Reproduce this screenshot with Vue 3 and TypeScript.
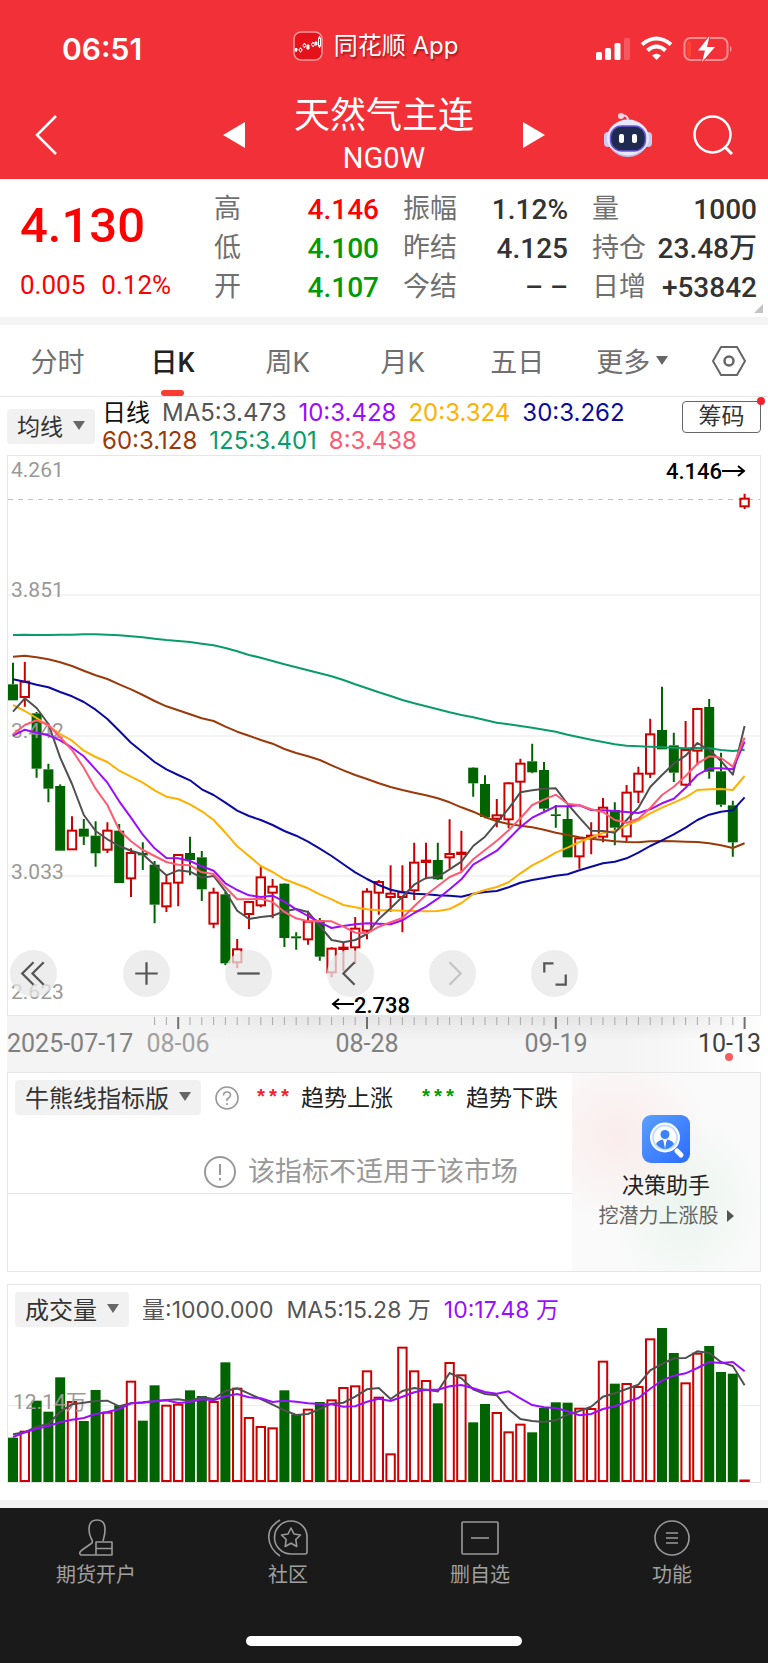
<script setup lang="ts">
import { ref } from 'vue'

interface Quote { label: string; value: string; tone?: string }
interface Line { name: string; color: string; points: number[] }
type Candle = [up: 0 | 1, high: number, top: number, bottom: number, low: number]

const quotes: Quote[][] = [
  [{ label: '高', value: '4.146', tone: 'up' }, { label: '低', value: '4.100', tone: 'down' }, { label: '开', value: '4.107', tone: 'down' }],
  [{ label: '振幅', value: '1.12%' }, { label: '昨结', value: '4.125' }, { label: '今结', value: '– –' }],
  [{ label: '量', value: '1000' }, { label: '持仓', value: '23.48万' }, { label: '日增', value: '+53842' }],
]

const tabs = ['分时', '日K', '周K', '月K', '五日', '更多']
const activeTab = ref('日K')

const legend = [
  [
    { text: '日线', color: '#111111' }, { text: 'MA5:3.473', color: '#555555' }, { text: '10:3.428', color: '#9b0dff' },
    { text: '20:3.324', color: '#ffb000' }, { text: '30:3.262', color: '#0a0aa0' },
  ],
  [{ text: '60:3.128', color: '#9a3a0a' }, { text: '125:3.401', color: '#0a9c68' }, { text: '8:3.438', color: '#ff5b74' }],
]

const px = (i: number) => 13 + i * 11.8
const py = (v: number) => v / 3 + 145
const vy = (v: number) => v / 3 - 47
const shift = (rows: Candle[], by: number): Candle[] =>
  rows.map(([up, h, t, b, l]) => [up, h + by, t + by, b + by, l + by])
const add = (vals: number[], by: number) => vals.map((v) => v + by)

const candles: Candle[] = [
  ...shift([
    [0, 188, 253, 301, 301], [1, 186, 245, 291, 320], [0, 336, 340, 506, 533], [0, 491, 508, 566, 607],
    [0, 553, 558, 752, 752], [1, 649, 692, 748, 748], [0, 657, 686, 710, 735], [0, 664, 707, 760, 800],
    [1, 667, 692, 749, 759], [0, 672, 692, 849, 849], [1, 745, 759, 835, 891], [0, 727, 759, 766, 810],
    [0, 783, 794, 914, 970], [1, 826, 850, 919, 936], [1, 762, 765, 848, 919], [0, 710, 759, 780, 826],
    [0, 753, 772, 868, 903], [1, 863, 878, 971, 985], [0, 875, 883, 1090, 1095], [1, 1017, 1048, 1087, 1105],
    [1, 905, 906, 942, 987],
  ], 0),
  ...shift([
    [1, 378, 412, 496, 502], [1, 417, 440, 458, 535], [0, 430, 431, 594, 621], [0, 577, 589, 595, 629],
    [1, 512, 545, 598, 614], [0, 534, 540, 650, 662], [1, 622, 626, 697, 712], [1, 608, 623, 627, 693],
    [1, 531, 566, 622, 672], [1, 445, 455, 572, 598], [1, 420, 426, 458, 524], [1, 376, 461, 471, 515],
    [1, 376, 457, 471, 577], [1, 308, 368, 451, 480], [1, 308, 362, 366, 418], [0, 308, 360, 418, 420],
    [1, 238, 342, 352, 386], [1, 272, 338, 342, 394], [0, 82, 83, 130, 170], [0, 106, 132, 231, 235],
    [1, 177, 226, 236, 262],
  ], 420),
  ...shift([
    [1, 427, 430, 538, 565], [1, 356, 371, 425, 565], [0, 311, 364, 397, 400], [0, 366, 390, 506, 512],
    [0, 495, 523, 528, 563], [0, 501, 537, 652, 652], [1, 592, 595, 649, 686], [1, 547, 587, 591, 643],
    [1, 474, 503, 590, 607], [0, 487, 510, 563, 616], [1, 435, 458, 589, 604], [1, 380, 401, 455, 489],
    [1, 236, 283, 401, 414], [0, 140, 270, 328, 328], [0, 278, 316, 398, 426], [1, 243, 330, 434, 437],
    [1, 203, 207, 332, 376], [0, 177, 201, 395, 416], [0, 338, 394, 494, 500], [0, 482, 496, 607, 650],
    [1, -439, -424, -401, -393],
  ], 120),
]

const lines: Line[] = [
  {
    name: 'ma125', color: '#0a9c68', points: [
      105, 104, 105, 105, 104, 104, 103, 103, 104, 106, 109, 112, 116, 120, 123, 126, 131, 136, 144, 154, 165,
      ...add([53, 63, 73, 82, 91, 100, 109, 120, 133, 145, 157, 168, 180, 190, 199, 208, 217, 225, 232, 240, 248,
        253, 258, 263, 269, 275, 284, 292, 299, 306, 313, 317, 319, 320, 322, 323, 325, 324, 325, 330, 333, 329], 120),
    ],
  },
  {
    name: 'ma60', color: '#9a3a0a', points: [
      170, 167, 172, 178, 187, 198, 212, 226, 237, 253, 268, 285, 303, 319, 331, 343, 355, 363, 380, 395, 407,
      ...add([0, 11, 27, 39, 49, 60, 76, 91, 105, 117, 130, 141, 150, 158, 166, 175, 187, 202, 215, 231, 244], 420),
      ...add([552, 557, 562, 569, 578, 585, 592, 596, 600, 604, 606, 607, 604, 603, 604, 605, 606, 610, 616, 624, 610], 120),
    ],
  },
  {
    name: 'ma30', color: '#0a0aa0', points: [
      238, 245, 254, 262, 276, 289, 306, 329, 357, 392, 428, 457, 486, 508, 525, 541, 568, 585, 608, 632, 648,
      ...add([240, 255, 273, 287, 305, 326, 348, 373, 397, 417, 435, 449, 457, 461, 463, 466, 467, 470, 461, 456, 453], 420),
      ...add([742, 728, 720, 714, 707, 703, 691, 680, 670, 665, 655, 638, 618, 601, 583, 563, 540, 524, 515, 511, 472], 120),
    ],
  },
  {
    name: 'ma20', color: '#ffb000', points: [
      315, 333, 354, 377, 402, 422, 452, 471, 486, 512, 530, 548, 571, 590, 597, 613, 634, 660, 698, 739, 768,
      ...add([378, 396, 418, 431, 445, 463, 478, 495, 502, 508, 511, 511, 512, 513, 514, 513, 507, 489, 462, 450, 441], 420),
      ...add([727, 700, 676, 658, 638, 623, 606, 592, 579, 573, 556, 541, 520, 503, 488, 472, 450, 448, 447, 450, 408], 120),
    ],
  },
  {
    name: 'ma5', color: '#505050', points: [
      335, 295, 324, 372, 473, 552, 645, 693, 718, 738, 752, 763, 795, 826, 811, 815, 833, 828, 874, 932, 957,
      ...add([531, 527, 514, 507, 516, 558, 600, 607, 600, 582, 537, 505, 470, 434, 414, 411, 388, 365, 318, 290, 248], 420),
      ...add([506, 457, 451, 446, 445, 492, 533, 572, 573, 578, 540, 503, 441, 405, 371, 347, 309, 330, 363, 404, 258], 120),
    ],
  },
  {
    name: 'ma10', color: '#9b0dff', points: [
      407, 389, 398, 406, 421, 443, 469, 508, 548, 604, 653, 704, 745, 774, 775, 783, 799, 812, 850, 870, 886,
      ...add([471, 467, 485, 508, 528, 547, 564, 558, 553, 550, 551, 553, 541, 519, 500, 476, 448, 418, 374, 353, 332], 420),
      ...add([597, 561, 533, 516, 499, 499, 496, 510, 511, 513, 516, 519, 508, 490, 476, 443, 405, 385, 385, 388, 305], 120),
    ],
  },
  {
    name: 'ma8', color: '#ff5b74', points: [
      403, 375, 361, 375, 412, 450, 503, 566, 615, 690, 724, 750, 768, 786, 794, 796, 817, 822, 862, 898, 898,
      ...add([476, 486, 516, 535, 544, 543, 544, 560, 578, 580, 560, 547, 534, 499, 465, 438, 411, 396, 358, 330, 302], 420),
      ...add([571, 535, 495, 479, 464, 491, 496, 508, 516, 540, 548, 536, 504, 465, 440, 408, 371, 349, 353, 380, 293], 120),
    ],
  },
]

const path = (pts: number[], y: (v: number) => number) =>
  pts.map((v, i) => `${px(i).toFixed(1)},${y(v).toFixed(1)}`).join(' ')

const levels = [
  { text: '4.261', y: 15, grid: 0 }, { text: '3.851', y: 135, grid: 140 }, { text: '3.442', y: 276, grid: 281 },
  { text: '3.033', y: 417, grid: 421 }, { text: '2.623', y: 537, grid: 0 },
]
const dates = [
  { text: '2025-07-17', x: 7, anchor: 'start', fill: '#808080' }, { text: '08-06', x: 178, anchor: 'middle', fill: '#a0a0a0' },
  { text: '08-28', x: 367, anchor: 'middle', fill: '#808080' }, { text: '09-19', x: 556, anchor: 'middle', fill: '#808080' },
  { text: '10-13', x: 761, anchor: 'end', fill: '#404040' },
]
const ticks = Array.from({ length: 51 }, (_, k) => k + 12)

const volumes = [
  473, 452, 362, 395, 292, 363, 423, 330, 395, 376, 302, 422, 316, 374, 371, 331, 348, 363, 247, 323, 411, 438, 442, 331, 403, 386,
  366, 358, 321, 316, 271, 350, 520, 200, 271, 300, 370, 246, 283, 427, 372, 396, 454, 431, 457, 384, 367, 368, 383, 384, 242, 311,
  309, 318, 175, 144, 219, 307, 218, 198, 276, 281, 602,
]
const volumeUp = new Set([
  1, 5, 8, 10, 13, 14, 17, 19, 20, 21, 22, 25, 27, 28, 29, 30, 31, 32, 33, 34, 35, 37, 38, 41, 42, 43, 48, 49, 50, 52, 53, 54, 57, 58, 62,
])
const volumeLines: Line[] = [
  {
    name: 'ma5', color: '#505050', points: [
      463, 457, 440, 432, 395, 373, 368, 363, 362, 379, 370, 367, 363, 360, 358, 363, 351, 357, 333, 325, 341, 357, 374, 391, 405, 402,
      387, 371, 368, 350, 328, 324, 357, 333, 324, 329, 334, 279, 295, 328, 342, 346, 388, 417, 423, 426, 421, 404, 393, 380, 350, 340,
      327, 314, 271, 252, 235, 234, 214, 219, 246, 258, 316],
  },
  {
    name: 'ma10', color: '#9b0dff', points: [
      471, 457, 446, 438, 427, 419, 414, 402, 396, 387, 370, 368, 364, 361, 369, 366, 358, 361, 349, 342, 352, 355, 366, 362, 365, 370,
      372, 373, 380, 379, 365, 356, 363, 350, 337, 329, 329, 319, 315, 325, 336, 341, 334, 355, 375, 382, 384, 394, 406, 402, 387, 379,
      365, 354, 326, 302, 287, 280, 264, 246, 249, 246, 274],
  },
]
const tools = [
  { label: '最早', d: 'M23 12 12 23l11 11M33 12 22 23l11 11' },
  { label: '放大', d: 'M23 12v22M12 23h22' },
  { label: '缩小', d: 'M12 23h22' },
  { label: '向左', d: 'M27 12 16 23l11 11' },
  { label: '向右', d: 'M20 12l11 11-11 11', off: true },
  { label: '全屏', d: 'M13 22v-9h9M24 34h10v-10' },
]
</script>

<template>
  <main class="page">
    <header class="top">
      <div class="status">
        <span class="clock">06:51</span>
        <span class="app">
          <svg width="30" height="30" viewBox="0 0 30 30" fill="none" stroke="#fff">
            <rect x="1" y="1" width="28" height="28" rx="7" fill="#e3121b" stroke="#ff9a9e" stroke-width="1.5" />
            <path d="M3 17v4M11.500 12v5M20 11v5M7.500 16.500v5M26.500 5v12" stroke-width="1.200" />
            <path d="M2 17.500h2v2H2zM14 14h2v4h-2zM22 11h2v3h-2z" fill="#fff" />
            <circle cx="7.500" cy="19" r="1.500" fill="#e3121b" /><circle cx="11.500" cy="14.500" r="1.500" fill="#e3121b" />
            <circle cx="20" cy="13.500" r="1.500" fill="#e3121b" /><rect x="25.500" y="7" width="2" height="8" fill="#e3121b" />
          </svg>
          同花顺 App
        </span>
        <svg class="signals" width="137" height="26" viewBox="0 0 137 26">
          <g fill="#fff">
            <rect x="0" y="16" width="6" height="8" rx="1.500" /><rect x="9" y="12" width="6" height="12" rx="1.500" />
            <rect x="18.500" y="7" width="6" height="17" rx="1.500" /><rect x="28" y="2" width="6" height="22" rx="1.500" opacity=".2" />
            <path d="M60.500 24l-4.500-4.500q4.500-3.500 9 0z" />
          </g>
          <path d="M46 8.500q14.500-12 29 0M51.500 14.500q9-8 18 0" fill="none" stroke="#fff" stroke-width="4" />
          <rect x="88.500" y="2" width="43" height="22" rx="6" fill="none" stroke="#fff" stroke-opacity=".45" stroke-width="2" />
          <rect x="91" y="5" width="4" height="16" rx="2" fill="#ff4433" />
          <path d="M134 9.500q3 3.500 0 7z" fill="#fff" opacity=".5" />
          <path d="M113.500 0 102 14.500h7L106 26l13-15h-8z" fill="#fff" stroke="#f13038" stroke-width="2" paint-order="stroke" />
        </svg>
      </div>
      <div class="titlebar">
        <button class="bare" aria-label="返回">
          <svg width="23" height="40" viewBox="0 0 23 40"><path d="M21 1 2 20l19 19" fill="none" stroke="#fff" stroke-width="2.500" /></svg>
        </button>
        <div class="switcher">
          <button class="bare" aria-label="上一个"><svg width="22" height="26" viewBox="0 0 22 26"><path d="M22 0v26L0 13z" fill="#fff" /></svg></button>
          <div class="name">
            <h1>天然气主连</h1>
            <p>NG0W</p>
          </div>
          <button class="bare" aria-label="下一个"><svg width="22" height="26" viewBox="0 0 22 26"><path d="M0 0v26l22-13z" fill="#fff" /></svg></button>
        </div>
        <div class="actions">
          <button class="bare" aria-label="智能助手">
            <svg width="48" height="46" viewBox="0 0 48 46">
              <path d="M17 4q7-2 7 5" fill="none" stroke="#d8dcf5" stroke-width="2" />
              <circle cx="17" cy="4" r="3" fill="#f3d5e2" />
              <rect x="0" y="20" width="8" height="15" rx="4" fill="#c9ccef" /><rect x="40" y="20" width="8" height="15" rx="4" fill="#c9ccef" />
              <ellipse cx="24" cy="26" rx="21" ry="18.500" fill="#e6e9fb" />
              <path d="M7 36q17 15 34 0-6 9-17 9T7 36z" fill="#b9c0ea" />
              <rect x="6.500" y="14" width="35" height="25" rx="11" fill="#1e2a4f" stroke="#6f55d9" stroke-width="1.500" />
              <rect x="15" y="22" width="5" height="9" rx="2" fill="#fff" /><rect x="28" y="22" width="5" height="9" rx="2" fill="#fff" />
            </svg>
          </button>
          <button class="bare" aria-label="搜索">
            <svg width="40" height="40" viewBox="0 0 40 40"><circle cx="19.500" cy="19.500" r="18" fill="none" stroke="#fff" stroke-width="2.500" /><path d="m32 32 7 7" stroke="#fff" stroke-width="3" /></svg>
          </button>
        </div>
      </div>
    </header>

    <section class="quote">
      <div class="last">
        <strong>4.130</strong>
        <span class="change"><span>0.005</span><span>0.12%</span></span>
      </div>
      <dl v-for="(col, c) in quotes" :key="c">
        <div v-for="q in col" :key="q.label"><dt>{{ q.label }}</dt><dd :class="q.tone">{{ q.value }}</dd></div>
      </dl>
      <svg class="fold" width="9" height="9" viewBox="0 0 9 9"><path d="M9 0v9H0z" fill="#c4c4c4" /></svg>
    </section>

    <nav class="tabs">
      <button v-for="t in tabs" :key="t" class="tab" :class="{ on: t === activeTab }" @click="activeTab = t">
        {{ t }}<i v-if="t === '更多'" class="caret"></i>
      </button>
      <button class="tab" aria-label="设置">
        <svg width="34" height="30" viewBox="0 0 34 30" fill="none" stroke="#666" stroke-width="2"><path d="M9 1h16l8 14-8 14H9L1 15z" stroke-linejoin="round" /><circle cx="17" cy="15" r="4.500" stroke-width="2.500" /></svg>
      </button>
    </nav>

    <section class="legend">
      <button class="pill">均线<i class="caret"></i></button>
      <div class="values">
        <p v-for="(row, r) in legend" :key="r">
          <span v-for="l in row" :key="l.text" :style="{ color: l.color }">{{ l.text }}</span>
        </p>
      </div>
      <button class="chips">筹码<i class="dot"></i></button>
    </section>

    <section class="price">
      <svg class="plot" viewBox="0 0 768 617">
        <defs>
          <linearGradient id="axisFade"><stop offset="0" stop-color="#f4f4f4" /><stop offset=".82" stop-color="#f4f4f4" /><stop offset="1" stop-color="#fefefe" /></linearGradient>
          <linearGradient id="axisShade" x2="0" y2="1"><stop offset="0" stop-color="#e4e4e4" /><stop offset="1" stop-color="#e4e4e4" stop-opacity="0" /></linearGradient>
          <linearGradient id="shadeMask"><stop offset=".2" stop-color="#000" /><stop offset=".4" stop-color="#fff" /><stop offset=".85" stop-color="#fff" /><stop offset="1" stop-color="#000" /></linearGradient>
          <mask id="axisMask"><rect x="7" y="561" width="754" height="24" fill="url(#shadeMask)" /></mask>
        </defs>
        <rect x="7" y="561" width="754" height="56" fill="url(#axisFade)" />
        <rect x="7" y="561" width="754" height="24" fill="url(#axisShade)" mask="url(#axisMask)" />
        <rect x="7.500" y=".5" width="753" height="560" fill="#fff" stroke="#e6e6e6" />
        <template v-for="l in levels" :key="l.text"><path v-if="l.grid" :d="`M8 ${l.grid}H760`" stroke="#f0f0f0" stroke-width="1.500" /></template>
        <path d="M8 44.500H760" stroke="#d8bd98" stroke-width="1.200" stroke-dasharray="5 5" />
        <g v-for="(c, i) in candles" :key="i" :stroke="c[0] ? '#cc0000' : '#006400'" stroke-width="2">
          <path :d="`M${px(i)} ${py(c[1])}V${py(c[2])}M${px(i)} ${py(c[3])}V${py(c[4])}`" />
          <rect v-if="c[0]" :x="px(i) - 4.2" :y="py(c[2])" width="8.400" :height="py(c[3]) - py(c[2])" fill="none" />
          <rect v-else :x="px(i) - 5" :y="py(c[2])" width="10" :height="py(c[3]) - py(c[2])" fill="#006400" stroke="none" />
        </g>
        <g class="num" font-size="21" fill="#999"><text v-for="l in levels" :key="l.text" x="11" :y="l.y + 7">{{ l.text }}</text></g>
        <polyline v-for="l in lines" :key="l.name" :points="path(l.points, py)" fill="none" :stroke="l.color" stroke-width="2" stroke-linejoin="round" />
        <g class="num" font-size="22" font-weight="500" fill="#000">
          <text x="666" y="24">4.146</text><text x="354" y="558">2.738</text>
        </g>
        <path d="M722 16h22m-6-5 6 5-6 5M354 549h-21m6-5-6 5 6 5" fill="none" stroke="#000" stroke-width="2" />
        <path v-for="i in ticks" :key="i" :d="`M${px(i)} 562v${(i - 14) % 16 ? 8 : 12}`" :stroke="(i - 14) % 16 ? '#a8a8a8' : '#707070'" :stroke-width="(i - 14) % 16 ? 1 : 2" />
        <g class="num" font-size="25">
          <text v-for="d in dates" :key="d.text" :x="d.x" y="597" :text-anchor="d.anchor" :fill="d.fill">{{ d.text }}</text>
        </g>
        <circle cx="729" cy="602" r="4" fill="#f85c5c" />
      </svg>
      <div class="tools">
        <button v-for="t in tools" :key="t.label" :aria-label="t.label">
          <svg viewBox="0 0 46 46" fill="none" :stroke="t.off ? '#c4c4c4' : '#555'" stroke-width="2.200"><path :d="t.d" /></svg>
        </button>
      </div>
    </section>

    <section class="panel indicator">
      <div class="chartside">
        <div class="upper">
          <div class="bar">
            <button class="pill">牛熊线指标版<i class="caret"></i></button>
            <svg class="help" width="24" height="24" viewBox="0 0 24 24" fill="none" stroke="#999" stroke-width="1.600"><circle cx="12" cy="12" r="11" /><path d="M8.500 9.500q0-3.500 3.500-3.500t3.500 3q0 2-2 3T12 15M12 17v2" /></svg>
            <span class="key"><b class="red">***</b>趋势上涨</span>
            <span class="key"><b class="green">***</b>趋势下跌</span>
          </div>
          <p class="notice">
            <svg width="32" height="32" viewBox="0 0 32 32" fill="none" stroke="#999" stroke-width="2"><circle cx="16" cy="16" r="15" /><path d="M16 8v11M16 22v2.500" /></svg>
            该指标不适用于该市场
          </p>
        </div>
      </div>
      <a class="helper" href="#">
        <svg width="48" height="48" viewBox="0 0 48 48">
          <defs><linearGradient id="tile" x2="1" y2="1"><stop offset="0" stop-color="#5aa0ff" /><stop offset="1" stop-color="#2c6bff" /></linearGradient></defs>
          <rect width="48" height="48" rx="9" fill="url(#tile)" />
          <path d="m35 36 4 4" stroke="#fff" stroke-width="5" stroke-linecap="round" />
          <circle cx="23" cy="22.500" r="14" fill="#c4dcff" stroke="#fff" stroke-width="2" /><circle cx="23" cy="22.500" r="11" fill="#fff" />
          <circle cx="23" cy="19.500" r="4.500" fill="#3b82fa" /><path d="M14 29q2-4 7-4.500l2 6 2-6q5 .5 7 4.500-4 5-9 5t-9-5z" fill="#3b82fa" /><path d="m21.500 25 1.500 9 1.500-9z" fill="#fff" />
        </svg>
        <strong>决策助手</strong>
        <span>挖潜力上涨股<i class="arrow"></i></span>
      </a>
    </section>

    <section class="panel volume">
      <div class="bar">
        <button class="pill">成交量<i class="caret"></i></button>
        <span class="vol">量:1000.000</span><span class="vol">MA5:15.28 万</span><span class="vol purple">10:17.48 万</span>
      </div>
      <svg class="plot" viewBox="8 0 752 155">
        <path d="M8 78.500H760" stroke="#ececec" />
        <g v-for="(v, i) in volumes" :key="i">
          <rect v-if="volumeUp.has(i)" :x="px(i) - 4.2" :y="Math.min(vy(v) + 1, 153.5)" width="8.400" :height="Math.max(153 - vy(v), 0.5)" fill="none" stroke="#cc0000" stroke-width="2" />
          <rect v-else :x="px(i) - 5" :y="vy(v)" width="10" :height="155 - vy(v)" fill="#006400" />
        </g>
        <text class="num" x="13" y="82" font-size="21" fill="#999">12.14万</text>
        <polyline v-for="l in volumeLines" :key="l.name" :points="path(l.points, vy)" fill="none" :stroke="l.color" stroke-width="2" />
      </svg>
    </section>

    <footer class="bottom">
      <nav>
        <a href="#">
          <svg width="40" height="38" viewBox="0 0 40 38"><path d="M36 36H5q-3-2 1-5l10-7q1-2-1-5-2-4-2-9 0-9 8-9t8 9q0 5-1 8l-1 4M20 36V23h16v13H20zM20 29.500h16" /></svg>
          期货开户
        </a>
        <a href="#">
          <svg width="40" height="38" viewBox="0 0 40 38"><path d="M23 2a16 16 0 1 0 0 33h14a2 2 0 0 0 2-2V18A16 16 0 0 0 23 2zM12 1Q0 8 0.800 19T12 37" /><path d="m23 9 3 6 6.500 1-4.700 4.500 1 7-5.800-3.300-5.800 3.300 1-7L13.500 16l6.500-1z" /></svg>
          社区
        </a>
        <a href="#">
          <svg width="40" height="38" viewBox="0 0 40 38"><rect x="2" y="3" width="36" height="32" rx="1" /><path d="M11 19h18" /></svg>
          删自选
        </a>
        <a href="#">
          <svg width="40" height="38" viewBox="0 0 40 38"><circle cx="20" cy="19" r="17" /><path d="M14 14h12M14 19h12M14 24h12" /></svg>
          功能
        </a>
      </nav>
      <div class="home"></div>
    </footer>
  </main>
</template>

<style>
body { margin: 0; background: #fff; }
</style>

<style scoped>
* { box-sizing: border-box; }
.page { font-family: Roboto, "Noto Sans CJK SC", sans-serif; color: #333; background: #fff; }
button { font: inherit; color: inherit; border: 0; padding: 0; background: none; cursor: pointer; }
a { color: inherit; text-decoration: none; }
h1, p, dl, dd { margin: 0; font-weight: 400; }
svg { display: block; }
.bare { display: block; }
.plot { width: 100%; height: auto; }
.num { font-family: Roboto, "Noto Sans CJK SC", sans-serif; }

.top { height: 179px; background: #f13038; color: #fff; }
.status { display: grid; grid-template-columns: 1fr auto 1fr; align-items: center; padding: 28px 35px 0 62px; height: 68px; }
.clock { padding-top: 2px; font: 600 30px/36px Inter, sans-serif; }
.app { display: flex; align-items: center; gap: 11px; margin-right: 44px; padding-bottom: 4px; font: 400 24px/34px Inter, "Noto Sans CJK SC", sans-serif; text-shadow: 1px 2px 2px rgba(90, 0, 0, .5); }
.signals { justify-self: end; margin-top: 2px; }
.titlebar { display: grid; grid-template-columns: 1fr 322px 1fr; align-items: center; height: 111px; padding: 0 35px 0 35px; }
.switcher { display: flex; align-items: center; justify-content: space-between; }
.switcher > .bare { padding-top: 22px; }
.titlebar > .bare, .actions { padding-top: 22px; }
.name { text-align: center; padding-top: 23px; }
.name h1 { font-size: 36px; line-height: 46px; }
.name p { font-size: 29px; line-height: 38px; }
.actions { display: flex; align-items: center; justify-content: flex-end; gap: 41px; }

.quote { position: relative; display: grid; grid-template-columns: 170fr 165fr 165fr 165fr; gap: 24px; height: 146px; padding: 11px 11px 0 20px; border-bottom: 8px solid #f4f4f4; }
.last { color: #f00; white-space: nowrap; }
.last strong { display: block; font-size: 49px; line-height: 72px; font-weight: 500; }
.change { display: flex; gap: 16px; font-size: 26px; line-height: 46px; }
dl > div { display: flex; justify-content: space-between; height: 39px; line-height: 39px; white-space: nowrap; }
dt { font-size: 27px; color: #707070; }
dd { font-size: 28px; font-weight: 500; }
.up { color: #f00; }
.down { color: #009b00; }
.fold { position: absolute; right: 5px; bottom: 4px; }

.tabs { display: grid; grid-template-columns: repeat(6, 147fr) 100fr; height: 72px; border-bottom: 1px solid #e6e6e6; }
.tab { position: relative; display: flex; align-items: center; justify-content: center; font-size: 27px; color: #707070; }
.tab.on { color: #222; font-weight: 500; }
.tab.on::after { content: ""; position: absolute; bottom: 0; width: 23px; height: 6px; border-radius: 3px; background: #fa3c32; }
.caret { margin-left: 10px; border: 6px solid transparent; border-top: 9px solid #666; border-bottom: 0; }
.tab .caret { margin-left: 6px; }

.legend { display: flex; align-items: flex-start; height: 58px; padding: 0 7px; }
.pill { display: flex; align-items: center; height: 35px; padding: 0 10px 3px; border-radius: 4px; background: #f1f1f1; font-size: 24px; white-space: nowrap; }
.legend .pill { margin-top: 12px; font-size: 23px; }
.values { flex: 1; padding: 2px 0 0 7px; font: 400 24px/28px Inter, "Noto Sans CJK SC", sans-serif; }
.values p { display: flex; gap: 12px; height: 28px; white-space: nowrap; }
.chips { position: relative; width: 79px; height: 32px; margin-top: 4px; border: 1px solid #666; border-radius: 4px; font-size: 23px; line-height: 30px; }
.dot { position: absolute; right: -5px; top: -5px; width: 8px; height: 8px; border-radius: 50%; background: #f5222d; }

.price { position: relative; }
.tools { position: absolute; left: 10px; right: 190px; top: 495px; display: flex; justify-content: space-between; }
.tools button { width: 47px; height: 47px; border-radius: 50%; background: rgba(231, 231, 231, .75); }
.tools button:first-child { margin-right: 11px; }

.panel { margin: 0 7px; border: 1px solid #e6e6e6; }
.bar { display: flex; align-items: center; padding: 7px 7px 0; white-space: nowrap; }
.indicator { display: flex; height: 200px; }
.chartside { flex: 1; min-width: 0; }
.upper { height: 121px; border-bottom: 1px solid #e6e6e6; }
.help { flex: none; margin: 0 16px 0 14px; }
.key { display: flex; align-items: center; gap: 10px; height: 35px; margin-right: 27px; padding-bottom: 3px; font-size: 23px; color: #222; }
.key b { padding-top: 6px; font: 700 20px/20px "Liberation Mono", monospace; }
.red { color: #f5222d; }
.green { color: #009b00; }
.notice { display: flex; align-items: center; gap: 12px; margin-top: 36px; padding-left: 196px; font-size: 27px; line-height: 42px; color: #999; white-space: nowrap; }
.helper { flex: none; width: 188px; display: flex; flex-direction: column; align-items: center; padding-top: 42px; background: radial-gradient(ellipse at 25% 32%, #faecec, rgba(250, 236, 236, 0) 45%), radial-gradient(ellipse at 60% 66%, #eaf5ee, rgba(234, 245, 238, 0) 50%), #fafafa; }
.helper strong { margin-top: 7px; font-size: 22px; line-height: 32px; font-weight: 400; color: #222; }
.helper span { display: flex; align-items: center; font-size: 20px; line-height: 28px; color: #666; white-space: nowrap; }
.arrow { margin-left: 8px; border: 6px solid transparent; border-left: 7px solid #555; border-right: 0; }

.volume { margin-top: 12px; }
.vol { margin-left: 13px; font: 400 23px/34px Inter, "Noto Sans CJK SC", sans-serif; color: #555; }
.purple { color: #9b0dff; }

.bottom { margin-top: 17px; border-top: 8px solid #f4f4f4; height: 163px; background: #1a1a1a; color: #a0a0a0; display: flex; flex-direction: column; justify-content: space-between; align-items: center; }
.bottom nav { align-self: stretch; display: grid; grid-template-columns: repeat(4, 1fr); padding-top: 11px; }
.bottom a { display: flex; flex-direction: column; align-items: center; gap: 4px; font-size: 20px; line-height: 28px; }
.bottom a svg { fill: none; stroke: #999; stroke-width: 1.6px; stroke-linejoin: round; }
.home { width: 36%; height: 10px; margin-bottom: 17px; border-radius: 5px; background: #fff; }
</style>
